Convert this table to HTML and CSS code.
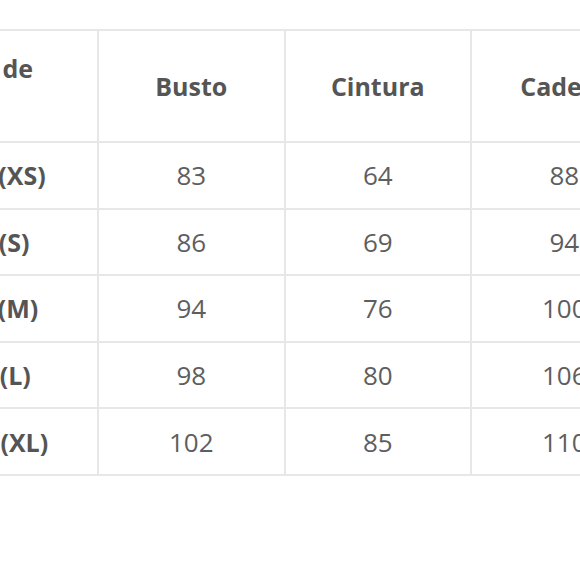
FILE: index.html
```html
<!DOCTYPE html>
<html lang="es">
<head>
<meta charset="utf-8">
<link rel="stylesheet" href="styles.css">
</head>
<body>
<div class="viewport">
  <table class="sizes">
    <colgroup>
      <col class="c-label">
      <col class="c-val">
      <col class="c-val">
      <col class="c-val">
    </colgroup>
    <thead>
      <tr class="head">
        <th class="label top">Talla de</th>
        <th>Busto</th>
        <th>Cintura</th>
        <th>Cadera</th>
      </tr>
    </thead>
    <tbody>
      <tr><td class="label">PP (XS)</td><td>83</td><td>64</td><td>88</td></tr>
      <tr><td class="label">P (S)</td><td>86</td><td>69</td><td>94</td></tr>
      <tr><td class="label">M (M)</td><td>94</td><td>76</td><td>100</td></tr>
      <tr><td class="label">G (L)</td><td>98</td><td>80</td><td>106</td></tr>
      <tr><td class="label">GG (XL)</td><td>102</td><td>85</td><td>110</td></tr>
    </tbody>
  </table>
</div>
</body>
</html>
```

FILE: styles.css
```css
html, body {
  margin: 0;
  padding: 0;
  background: #ffffff;
}

.viewport {
  width: 580px;
  height: 580px;
  overflow: hidden;
  padding-top: 29px;
  box-sizing: border-box;
}

.sizes {
  width: 750px;
  border-collapse: collapse;
  table-layout: fixed;
  margin-left: -93px;
  font-family: "Open Sans", Lato, sans-serif;
  color: #5e5e5e;
}

.c-label { width: 190px; }
.c-val { width: 186.5px; }

.sizes th,
.sizes td {
  border: 2px solid #e7e7e7;
  text-align: center;
  vertical-align: middle;
  padding: 0;
}

.sizes th {
  height: 110px;
  font-size: 25px;
  font-weight: 700;
  color: #555555;
}

.sizes td {
  height: 64.6px;
  font-size: 26px;
  font-weight: 400;
}

.sizes td.label {
  font-weight: 700;
  font-size: 25px;
  color: #555555;
}

.sizes th.top {
  vertical-align: top;
  text-align: right;
  white-space: nowrap;
  height: 90px;
  padding-top: 20px;
  padding-right: 64px;
}
```
